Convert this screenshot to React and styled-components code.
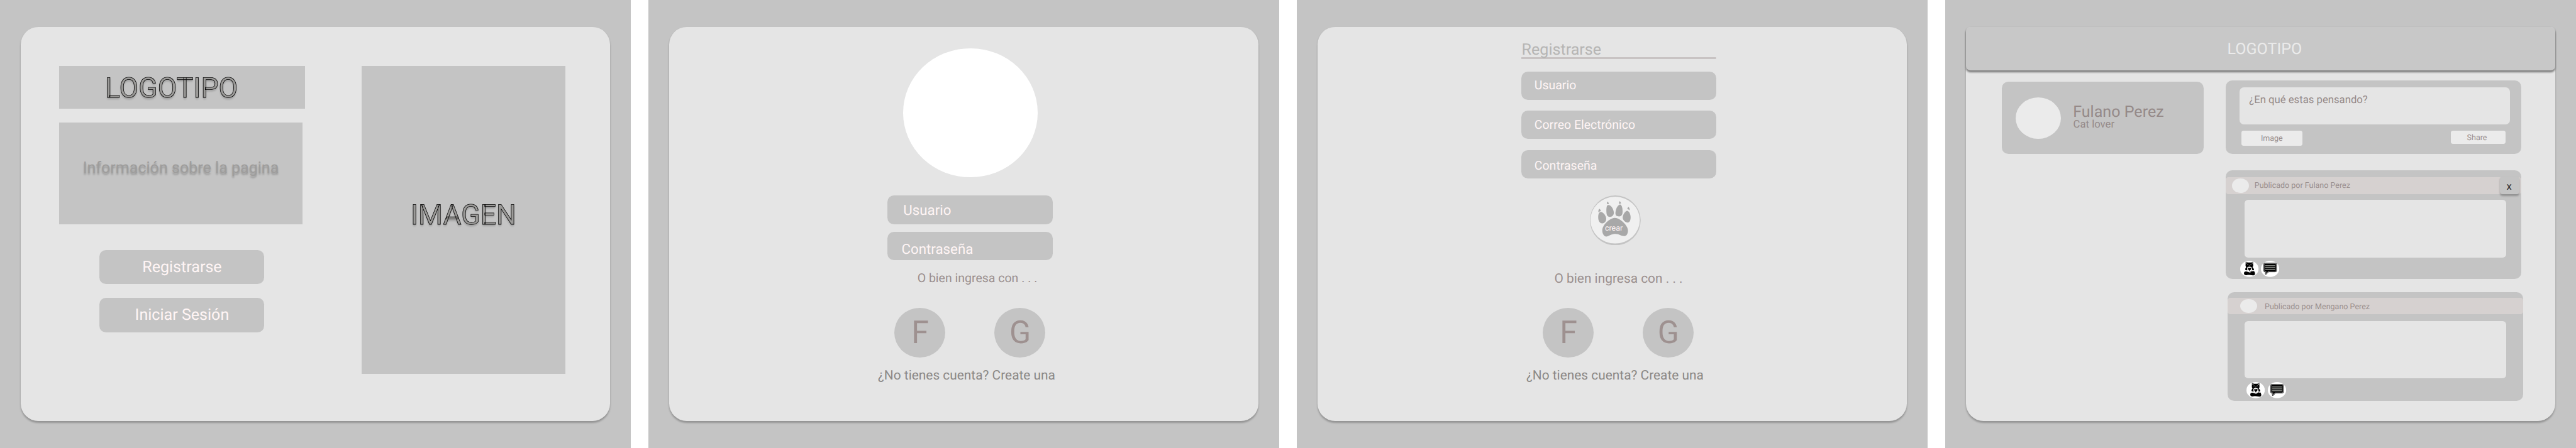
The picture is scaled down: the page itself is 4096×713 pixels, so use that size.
import React from "react";
import styled, { createGlobalStyle } from "styled-components";

// Design units (5880 wide board) to CSS pixels.
const u = (n) => `${Math.round(((n * 4096) / 5880) * 1000) / 1000}px`;

const gray = "#c4c4c4";
const paper = "#e5e5e5";
const pale = "#ebebeb";
const blush = "#fff5f5";
const mauve = "#9a8f8e";

const Global = createGlobalStyle`
  * { box-sizing: border-box; }
  body {
    margin: 0;
    background: #fff;
    font-family: Roboto, "Liberation Sans", sans-serif;
    text-rendering: geometricPrecision;
    overflow: hidden;
  }
`;

const Board = styled.main`
  display: flex;
  gap: ${u(40)};
  width: ${u(5880)};
  height: 713px;
  overflow: hidden;
`;

const Screen = styled.section`
  flex: none;
  width: ${u(1440)};
  height: ${u(1024)};
  padding: ${u(62)} ${u(47)};
  background: ${gray};
`;

const Card = styled.div`
  display: flex;
  flex-direction: ${(p) => (p.$row ? "row" : "column")};
  width: ${u(1346)};
  height: ${u(899.5)};
  border-radius: ${(p) => (p.$flatTop ? u(10) + " " + u(10) : u(40) + " " + u(40))} ${u(40)} ${u(40)};
  background: ${paper};
  box-shadow: 0 ${u(4)} ${u(4)} rgba(0, 0, 0, 0.25);
`;

const Text = styled.span`
  display: block;
  flex: none;
  width: max-content;
  margin: ${(p) => u((p.$top || 0) + 1)} 0 ${u(-1)} ${(p) => u((p.$left || 0) + 1)};
  font-size: ${(p) => u(p.$size)};
  line-height: ${(p) => u(p.$size * 1.171875)};
  color: ${(p) => p.$color || mauve};
  white-space: pre;
`;

const Outlined = styled(Text)`
  will-change: transform;
  -webkit-text-stroke: ${u(1.15)} #000;
  text-shadow: 0 ${u(4)} ${u(4)} rgba(0, 0, 0, 0.18);
`;

const Shaded = styled(Text)`
  text-shadow: 0 ${u(4)} ${u(4)} rgba(0, 0, 0, 0.25);
`;

/* Landing */
const Intro = styled.div`
  display: flex;
  flex-direction: column;
  width: ${u(561)};
  margin: ${u(89)} 0 0 ${u(88)};
`;

const Block = styled.div`
  width: ${(p) => u(p.$w)};
  height: ${(p) => u(p.$h)};
  margin: ${(p) => u(p.$top || 0)} 0 0 ${(p) => u(p.$left || 0)};
  display: flex;
  flex-direction: column;
  background: ${gray};
`;

const Actions = styled.div`
  display: flex;
  flex-direction: column;
  gap: ${u(32)};
  margin: ${u(59)} 0 0 ${u(91.5)};
`;

const Button = styled.div`
  display: flex;
  align-items: center;
  justify-content: center;
  width: ${u(377)};
  height: ${u(78)};
  border-radius: ${u(15)};
  background: ${gray};
`;

/* Forms */
const Portrait = styled.div`
  width: ${u(306)};
  height: ${u(295)};
  margin: ${u(48)} 0 0 ${u(535)};
  border-radius: 50%;
  background: #fff;
`;

const Fields = styled.div`
  display: flex;
  flex-direction: column;
  gap: ${(p) => u(p.$gap)};
  width: ${(p) => u(p.$w)};
  margin: ${(p) => u(p.$top)} 0 0 ${(p) => u(p.$left)};
`;

const Field = styled.div`
  flex: none;
  height: ${u(65)};
  border-radius: ${u(15)};
  background: ${gray};
  display: flex;
`;

const Title = styled.div`
  width: ${u(444)};
  height: ${u(48)};
  margin: ${u(25)} 0 0 ${u(466)};
  padding-top: ${u(6)};
  background: linear-gradient(#c8c3c3, #c8c3c3) bottom / 100% ${u(5)} no-repeat;
`;

const Socials = styled.div`
  display: flex;
  gap: ${u(112)};
  height: ${u(114)};
  margin: ${(p) => u(p.$top)} 0 0 ${u(515)};
`;

const Social = styled.div`
  display: flex;
  align-items: center;
  justify-content: center;
  width: ${u(116)};
  height: ${u(114)};
  border-radius: 50%;
  background: ${gray};
`;

const PawButton = styled.div`
  position: relative;
  width: ${u(116)};
  height: ${u(114)};
  margin: ${u(38)} 0 0 ${u(622)};
  svg { display: block; width: 100%; height: 100%; }
`;

const PawLabel = styled(Text)`
  position: absolute;
  left: ${u(34.4)};
  top: ${u(66.4)};
  margin: 0;
`;

/* Feed */
const Header = styled.header`
  flex: none;
  display: flex;
  height: ${u(99)};
  border-radius: ${u(10)};
  background: #c8c8c8;
  box-shadow: 0 ${u(4)} ${u(4)} rgba(0, 0, 0, 0.25), 0 ${u(4)} ${u(4)} rgba(0, 0, 0, 0.25);
`;

const Feed = styled.div`
  display: flex;
  align-items: flex-start;
`;

const Profile = styled.div`
  flex: none;
  display: flex;
  width: ${u(461)};
  height: ${u(165)};
  margin: ${u(26)} 0 0 ${u(82)};
  border-radius: ${u(15)};
  background: ${gray};
`;

const Avatar = styled.div`
  flex: none;
  width: ${(p) => u(p.$w)};
  height: ${(p) => u(p.$h)};
  margin: ${(p) => u(p.$top)} 0 0 ${(p) => u(p.$left)};
  border-radius: 50%;
  background: ${pale};
`;

const Column = styled.div`
  display: flex;
  flex-direction: column;
  margin-left: ${u(51)};
`;

const Panel = styled.article`
  display: flex;
  flex-direction: column;
  width: ${u(674)};
  height: ${(p) => u(p.$h)};
  margin: ${(p) => u(p.$top)} 0 0 ${(p) => u(p.$left || 0)};
  border-radius: ${u(15)};
  background: ${gray};
`;

const Prompt = styled.div`
  flex: none;
  display: flex;
  width: ${u(617)};
  height: ${u(85)};
  margin: ${u(15)} 0 0 ${u(31)};
  border-radius: ${u(10)};
  background: ${paper};
`;

const Tools = styled.div`
  display: flex;
  justify-content: space-between;
  margin: ${u(15)} ${u(35)} 0 ${u(36)};
`;

const Tool = styled.div`
  display: flex;
  width: ${(p) => u(p.$w)};
  height: ${(p) => u(p.$h)};
  border-radius: ${u(5)};
  background: ${pale};
`;

const Strip = styled.div`
  flex: none;
  display: flex;
  height: ${(p) => u(p.$h)};
  margin-top: ${(p) => u(p.$top)};
  border-radius: ${u(6)};
  background: #d6d1d0;
`;

const Close = styled.div`
  display: flex;
  width: ${u(45.5)};
  height: ${u(39)};
  margin: ${u(-1)} ${u(3.5)} 0 auto;
  border-radius: ${u(6)};
  background: ${gray};
  box-shadow: 0 ${u(4)} ${u(4)} rgba(0, 0, 0, 0.25);
`;

const Content = styled.div`
  flex: none;
  width: ${u(598)};
  height: ${(p) => u(p.$h)};
  margin: ${(p) => u(p.$top)} 0 0 ${(p) => u(p.$left)};
  border-radius: ${u(8)};
  background: ${paper};
`;

const Reactions = styled.div`
  display: flex;
  gap: ${(p) => u(p.$gap)};
  margin: ${(p) => u(p.$top)} 0 0 ${(p) => u(p.$left)};
  svg { display: block; width: ${u(42)}; height: ${u(37)}; }
`;

const Paw = () => (
  <svg viewBox="0 0 348 342" preserveAspectRatio="none">
    <ellipse cx="174" cy="171" rx="174" ry="171" fill="#c4c4c4" />
    <ellipse cx="173" cy="169.5" rx="169" ry="160.5" fill="#f0f0f0" />
    <g fill="#a8a8a8">
      <path d="M172 154C140 154 85 200 85 240C85 262 97 282 112 282C130 282 145 264 172 264C199 264 215 279 236 279C252 279 261 260 261 240C261 205 205 154 172 154Z" />
      <path d="M75 113C93 113 112 143 112 160C112 178 97 192 84 192C66 192 57 172 57 150C57 130 62 113 75 113Z" />
      <path d="M127 66C146 66 164 98 164 120C164 138 150 147 137 147C118 147 113 130 113 105C113 80 116 66 127 66Z" />
      <path d="M208 62C220 66 224 90 224 110C224 132 217 144 200 144C184 144 175 138 175 122C175 98 190 62 208 62Z" />
      <path d="M256 105C270 107 279 130 279 150C279 170 273 186 259 186C243 186 225 170 225 152C225 135 240 105 256 105Z" />
      <path d="M65 92C71 96 75 103 75 108C68 109 63 113 59 116C56 107 60 97 65 92Z" />
      <path d="M122 42C127 47 130 54 129 60C124 57 120 57 116 59C116 52 118 46 122 42Z" />
      <path d="M205 39C210 44 213 51 213 57C209 55 204 55 199 58C199 50 201 44 205 39Z" />
      <path d="M264 79C270 84 274 92 272 103C268 98 263 95 256 94C257 88 260 83 264 79Z" />
    </g>
  </svg>
);

const Cat = () => (
  <svg viewBox="0 0 126 111" preserveAspectRatio="none">
    <ellipse cx="63" cy="55.5" rx="63" ry="55.5" fill="#fff" />
    <path d="M38 6L52 12H74L88 6L89 28C91 36 88 41 84 43C90 49 95 56 95 61C94 66 88 67 84 64L80 69C86 74 90 75 91 70L97 73C103 84 104 96 95 99C82 102 60 95 48 98C36 101 26 97 26 86C26 77 32 72 42 73C55 74 60 82 72 81C68 75 60 69 51 62C49 66 43 67 38 64C31 60 36 50 42 44C38 40 36 34 37 28Z" fill="#000" />
    <path d="M41 10L49 14L42 21ZM85 10L77 14L84 21Z" fill="#fff" />
    <path d="M48 28Q52 22 56 28M70 28Q74 22 78 28M60 32L63 35L66 32" fill="none" stroke="#fff" strokeWidth="2.5" />
    <path d="M48 47C53 39 73 39 79 47C86 58 81 70 75 75C66 74 55 69 48 61Z" fill="#fff" />
    <path d="M64 70C58 64 51 58 53 51C56 45 62 46 64 51C67 46 74 46 76 51C78 58 70 64 64 70Z" fill="#000" />
  </svg>
);

const Chat = () => (
  <svg viewBox="0 0 124 111" preserveAspectRatio="none">
    <ellipse cx="62" cy="55.5" rx="62" ry="55.5" fill="#fff" />
    <path d="M26 16H98Q105 16 105 23V69Q105 76 98 76H52L34 94L30 92V76H26Q19 76 19 69V23Q19 16 26 16Z" fill="#999" stroke="#000" strokeWidth="3" strokeLinejoin="round" />
    <path d="M28 20H96Q101 20 101 25V67Q101 72 96 72H49L36 87V72H28Q23 72 23 67V25Q23 20 28 20Z" fill="#000" />
    <path d="M29 34H96M29 47H96M29 60H96" stroke="#dfe3dc" strokeWidth="4" />
  </svg>
);

const SocialRow = ({ top }) => (
  <Socials $top={top}>
    <Social><Text $size={72} $color="#9e9190">F</Text></Social>
    <Social><Text $size={72} $color="#9e9190">G</Text></Social>
  </Socials>
);

const SignupHint = () => (
  <Text $size={30} $top={23} $left={476} $color="#8b8886">¿No tienes cuenta? Create una</Text>
);

const Landing = () => (
  <Screen>
    <Card $row>
      <Intro>
        <Block $w={561} $h={97}>
          <Outlined $size={64} $top={12.2} $left={103.5} $color="#9c9b99">LOGOTIPO</Outlined>
        </Block>
        <Block $w={556} $h={232} $top={32}>
          <Shaded $size={36} $top={82.5} $left={53} $color="#9e9d9c">Información sobre la pagina</Shaded>
        </Block>
        <Actions>
          <Button><Text $size={36} $color={blush}>Registrarse</Text></Button>
          <Button><Text $size={36} $color={blush}>Iniciar Sesión</Text></Button>
        </Actions>
      </Intro>
      <Block $w={466} $h={703} $top={89} $left={129}>
        <Outlined $size={64} $top={301} $left={111.5} $color="#9c9b99">IMAGEN</Outlined>
      </Block>
    </Card>
  </Screen>
);

const Login = () => (
  <Screen>
    <Card>
      <Portrait />
      <Fields $w={377} $gap={18} $top={42} $left={499}>
        <Field><Text $size={32} $top={14.3} $left={35} $color={blush}>Usuario</Text></Field>
        <Field><Text $size={32} $top={20.3} $left={31} $color={blush}>Contraseña</Text></Field>
      </Fields>
      <Text $size={28} $top={24} $left={566}>O bien ingresa con . . .</Text>
      <SocialRow top={51.2} />
      <SignupHint />
    </Card>
  </Screen>
);

const Register = () => (
  <Screen>
    <Card>
      <Title><Text $size={36} $left={-0.5} $color="#b6b5b4">Registrarse</Text></Title>
      <Fields $w={444} $gap={25} $top={28} $left={466}>
        <Field><Text $size={28} $top={16} $left={28.5} $color={blush}>Usuario</Text></Field>
        <Field><Text $size={28} $top={16} $left={28.5} $color={blush}>Correo Electrónico</Text></Field>
        <Field><Text $size={28} $top={19} $left={28.5} $color={blush}>Contraseña</Text></Field>
      </Fields>
      <PawButton>
        <Paw />
        <PawLabel $size={18} $color={blush}>crear</PawLabel>
      </PawButton>
      <Text $size={30} $top={58.8} $left={540}>O bien ingresa con . . .</Text>
      <SocialRow top={49} />
      <SignupHint />
    </Card>
  </Screen>
);

const Home = () => (
  <Screen>
    <Card $flatTop>
      <Header><Text $size={36} $top={28.6} $left={596.2} $color={pale}>LOGOTIPO</Text></Header>
      <Feed>
        <Profile>
          <Avatar $w={104} $h={95} $top={35} $left={32} />
          <div>
            <Text $size={36} $top={47.6} $left={26} $color="#958a89">Fulano Perez</Text>
            <Text $size={24} $top={-6.8} $left={26.5} $color="#958a89">Cat lover</Text>
          </div>
        </Profile>
        <Column>
          <Panel $h={168} $top={23}>
            <Prompt><Text $size={24} $top={15.7} $left={21} $color="#958a89">¿En qué estas pensando?</Text></Prompt>
            <Tools>
              <Tool $w={138} $h={34}><Text $size={18} $top={7.3} $left={42.8}>Image</Text></Tool>
              <Tool $w={126} $h={30}><Text $size={18} $top={5.3} $left={36.2}>Share</Text></Tool>
            </Tools>
          </Panel>
          <Panel $h={248} $top={37}>
            <Strip $h={38} $top={16}>
              <Avatar $w={39} $h={33} $top={3} $left={14} />
              <Text $size={18} $top={9.3} $left={11.2}>Publicado por Fulano Perez</Text>
              <Close><Text $size={24} $top={8.7} $left={14.5} $color="#333">x</Text></Close>
            </Strip>
            <Content $h={131} $top={14} $left={42} />
            <Reactions $gap={5} $top={8.5} $left={33}><Cat /><Chat /></Reactions>
          </Panel>
          <Panel $h={248} $top={31} $left={4}>
            <Strip $h={37} $top={13}>
              <Avatar $w={39} $h={32} $top={2} $left={29} />
              <Text $size={18} $top={9.3} $left={15.6}>Publicado por Mengano Perez</Text>
            </Strip>
            <Content $h={132} $top={15} $left={38} />
            <Reactions $gap={7} $top={8} $left={43}><Cat /><Chat /></Reactions>
          </Panel>
        </Column>
      </Feed>
    </Card>
  </Screen>
);

export default function App() {
  return (
    <>
      <Global />
      <Board>
        <Landing />
        <Login />
        <Register />
        <Home />
      </Board>
    </>
  );
}
